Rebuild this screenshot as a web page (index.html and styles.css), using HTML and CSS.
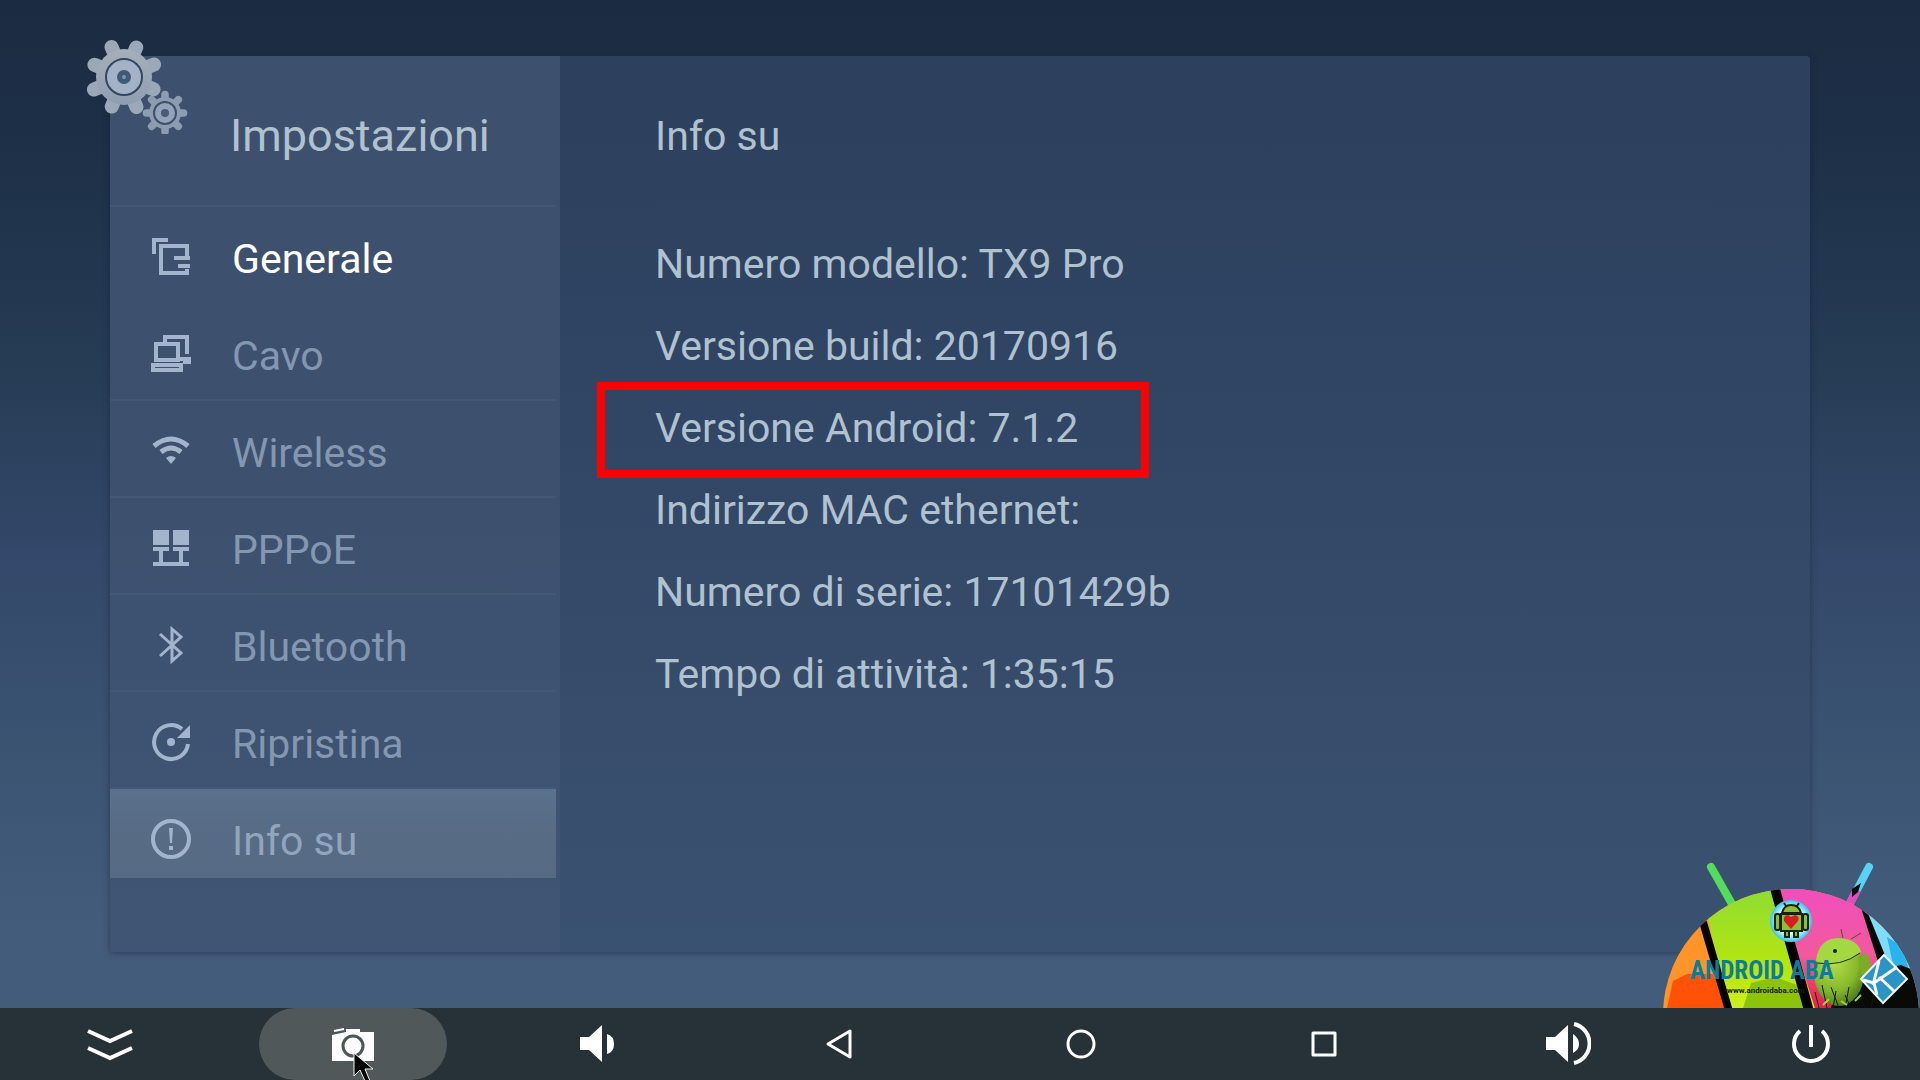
FILE: index.html
```html
<!DOCTYPE html>
<html lang="it">
<head>
<meta charset="utf-8">
<meta name="viewport" content="width=device-width, initial-scale=1">
<title>Impostazioni</title>
<link rel="stylesheet" href="styles.css">
</head>
<body>
<main class="screen">
  <div class="panel">
    <svg class="gears" viewBox="0 0 104 96" aria-hidden="true">
      <defs>
        <linearGradient id="metal" x1="0" y1="0" x2="0" y2="1">
          <stop offset="0" stop-color="#a6afba"/>
          <stop offset="1" stop-color="#8f9eb2"/>
        </linearGradient>
        <g id="teeth">
          <path d="M0-32V32M-32 0H32M-23-23L23 23M-23 23L23-23"/>
        </g>
      </defs>
      <g transform="translate(39 39)">
        <use href="#teeth" transform="rotate(22.5)" stroke="#9ba8b7" stroke-width="14" stroke-linecap="round"/>
        <circle r="28" fill="url(#metal)"/>
        <circle r="18" fill="#a3b2c6" stroke="#33475f" stroke-width="2"/>
        <circle r="7" fill="#425975"/>
        <circle r="2" fill="#8495ad"/>
      </g>
      <g transform="translate(80 75)">
        <use href="#teeth" transform="scale(.58)" stroke="#8c9cb1" stroke-width="13" stroke-linecap="round"/>
        <circle r="16" fill="#8c9cb1"/>
        <circle r="11" fill="#93a4ba" stroke="#3c516d" stroke-width="2"/>
        <circle r="4" fill="#465d79"/>
      </g>
    </svg>

    <nav class="sidebar" aria-label="Impostazioni">
      <h1 class="sidebar-title">Impostazioni</h1>
      <ul class="menu">
        <li class="menu-row"><a class="menu-link is-bright" href="#generale">
          <svg class="menu-icon" viewBox="0 0 40 40"><path d="M3 17V3H17M36 19V9H10V36H36V32M23 21H39M27 29H39" fill="none" stroke="currentColor" stroke-width="4"/></svg>
          <span>Generale</span></a></li>
        <li class="menu-row"><a class="menu-link" href="#cavo">
          <svg class="menu-icon" viewBox="0 0 40 40"><path d="M14 8V3H36V20M5 10H27V26H5ZM2 31H30V36H2ZM29 25H39V28H32" fill="none" stroke="currentColor" stroke-width="4"/></svg>
          <span>Cavo</span></a></li>
        <li class="menu-row"><a class="menu-link" href="#wireless">
          <svg class="menu-icon" viewBox="0 0 40 40"><path d="M3 15Q20 1 37 15M10 21Q20 13 30 21" fill="none" stroke="currentColor" stroke-width="5"/><path d="M15 27Q20 23 25 27L20 33Z" fill="currentColor"/></svg>
          <span>Wireless</span></a></li>
        <li class="menu-row"><a class="menu-link" href="#pppoe">
          <svg class="menu-icon" viewBox="0 0 40 40"><path d="M2 2H18V17H2ZM22 2H38V17H22Z" fill="currentColor"/><path d="M2 21H18M22 21H38M2 36H38M10 21V36M30 21V36" fill="none" stroke="currentColor" stroke-width="4"/></svg>
          <span>PPPoE</span></a></li>
        <li class="menu-row"><a class="menu-link" href="#bluetooth">
          <svg class="menu-icon" viewBox="0 0 40 40"><path d="M9 9L30 28L21 36V4L30 12L9 31" fill="none" stroke="currentColor" stroke-width="3"/></svg>
          <span>Bluetooth</span></a></li>
        <li class="menu-row"><a class="menu-link" href="#ripristina">
          <svg class="menu-icon" viewBox="0 0 40 40"><path d="M37 22A17 17 0 1 1 31 7" fill="none" stroke="currentColor" stroke-width="4"/><path d="M39 3V16H26Z" fill="currentColor"/><circle cx="20" cy="20" r="4" fill="currentColor"/></svg>
          <span>Ripristina</span></a></li>
        <li class="menu-row"><a class="menu-link is-selected" href="#info" aria-current="page">
          <svg class="menu-icon" viewBox="0 0 40 40"><circle cx="20" cy="20" r="18" fill="none" stroke="currentColor" stroke-width="4"/><path d="M18 9H22L21 24H19ZM18 27H22V31H18Z" fill="currentColor"/></svg>
          <span>Info su</span></a></li>
      </ul>
    </nav>

    <section class="details">
      <h2 class="details-title">Info su</h2>
      <ul class="facts">
        <li>Numero modello: TX9 Pro</li>
        <li>Versione build: 20170916</li>
        <li class="marked">Versione Android: 7.1.2</li>
        <li>Indirizzo MAC ethernet:</li>
        <li>Numero di serie: 17101429b</li>
        <li>Tempo di attività: 1:35:15</li>
      </ul>
    </section>
  </div>

  <svg class="brand" viewBox="0 0 265 153" role="img" aria-label="Android ABA">
    <defs>
      <clipPath id="dome"><ellipse cx="136" cy="160" rx="128" ry="126"/></clipPath>
      <linearGradient id="lime" x1="0" y1="0" x2="0" y2="1">
        <stop offset="0" stop-color="#8cdc35"/><stop offset=".7" stop-color="#b8e60c"/><stop offset="1" stop-color="#d0ee20"/>
      </linearGradient>
      <linearGradient id="pink" x1="0" y1="0" x2="0" y2="1">
        <stop offset="0" stop-color="#f04cc4"/><stop offset=".6" stop-color="#f25a9c"/><stop offset="1" stop-color="#e8204a"/>
      </linearGradient>
      <radialGradient id="bot" cx=".4" cy=".3" r=".8">
        <stop offset="0" stop-color="#b8e04c"/><stop offset=".6" stop-color="#86b82a"/><stop offset="1" stop-color="#3c6412"/>
      </radialGradient>
      <radialGradient id="halo">
        <stop offset=".6" stop-color="#e4fbff"/><stop offset="1" stop-color="#36c4ea"/>
      </radialGradient>
    </defs>
    <path d="M56 12L77 49" stroke="#55dc5a" stroke-width="8" stroke-linecap="round"/>
    <path d="M214 12L194 50" stroke="#58d2f6" stroke-width="8" stroke-linecap="round"/>
    <path d="M202 35L194 50" stroke="#e04cbc" stroke-width="8"/>
    <path d="M197 34L206 28L203 37L197 42Z" fill="#0a0a0a"/>
    <g clip-path="url(#dome)">
      <rect width="265" height="153" fill="#ff9428"/>
      <path d="M12 153L18 126L32 119H60L72 153Z" fill="#ff5206"/>
      <path d="M46 30H118L160 153H72Z" fill="url(#lime)"/>
      <path d="M88 153L96 128L120 122L142 130L150 153Z" fill="#8cc40c"/>
      <path d="M118 20H205L245 153H160Z" fill="url(#pink)"/>
      <path d="M204 40H265V153H238Z" fill="#7fdcfa"/>
      <path d="M232 82L248 92L256 124L240 118Z" fill="#28b4f0"/>
      <path d="M45 67L51 67L77 156H71Z" stroke="#060606" stroke-width="2"/>
      <path d="M115 30H123L158 156H150Z" stroke="#060606" stroke-width="2"/>
      <path d="M202 40L212 56L234 110L226 116Z" fill="#060606"/>
      <path d="M176 153L180 138L206 128L220 116L246 110L265 118V153Z" fill="#080a06"/>
    </g>
    <circle cx="136" cy="66" r="21" fill="url(#halo)"/>
    <g stroke="#18220c" stroke-width="2" fill="#8cc030">
      <path d="M130 72V82H134V72M139 72V82H143V72"/>
      <rect x="120" y="59" width="5" height="16" rx="2"/>
      <rect x="148" y="59" width="5" height="16" rx="2"/>
      <path d="M126 59H147V76H126Z"/>
      <path d="M127 58Q129 50 136 50Q144 50 146 58ZM131 51L129 48M142 51L144 48"/>
    </g>
    <path d="M136 74L129 66Q128 60 133 60L136 62L140 60Q145 61 143 66Z" fill="#d81c24"/>
    <path d="M188 83L186 74M196 84L206 78" stroke="#3c5c28" stroke-width="1"/>
    <ellipse cx="184" cy="118" rx="25" ry="33" fill="url(#bot)"/>
    <path d="M161 106Q163 84 183 83Q203 84 206 97Q186 112 161 106Z" fill="#a4d840"/>
    <rect x="205" y="99" width="11" height="26" rx="5" fill="#7aac28" transform="rotate(-12 210 112)"/>
    <path d="M162 108Q186 112 205 98" fill="none" stroke="#20340c" stroke-width="1"/>
    <circle cx="180" cy="96" r="2" fill="#142008"/>
    <path d="M164 153L160 137M172 153L167 130M178 153L181 136M184 153L176 132M190 153L194 132M196 153L190 140M202 153L208 130M210 153L204 138M216 153L220 132" stroke="#0c1806" stroke-width="1" fill="none"/>
    <path d="M168 150L174 144M186 146L192 150M200 146L206 140" stroke="#9cd83c" stroke-width="2"/>
    <text class="brand-name" x="35" y="124">ANDROID ABA</text>
    <text class="brand-url" x="72" y="138">www.androidaba.com</text>
    <path d="M229 100L252 124L228 148L206 124Z" fill="#2a94c4" stroke="#f2f8fa" stroke-width="2"/>
    <path d="M224 106L218 130M219 128L242 112M224 122L240 137M208 125L219 128L222 140" stroke="#f2f8fa" stroke-width="3" fill="none"/>
  </svg>
</main>

<footer class="system-bar">
  <button class="key" type="button" aria-label="Nascondi barra"><svg class="key-icon" viewBox="0 0 48 48"><path d="M2 11L24 21L46 11M2 28L24 38L46 28" fill="none" stroke="currentColor" stroke-width="4"/></svg></button>
  <button class="key is-hovered" type="button" aria-label="Schermata"><svg class="key-icon" viewBox="0 0 48 48"><path d="M3 15L17 12V9H31V12H45V41H3Z" fill="currentColor"/><path d="M5 11L15 9" stroke="currentColor" stroke-width="2"/><circle cx="24" cy="26" r="10" fill="none" stroke="#4f5658" stroke-width="3"/></svg>
    <svg class="pointer" viewBox="0 0 24 28" aria-hidden="true"><path d="M2 1V24L8 18L13 29H18L13 17H21Z" fill="#000" stroke="#f4f4f4" stroke-width="1"/></svg></button>
  <button class="key" type="button" aria-label="Abbassa volume"><svg class="key-icon" viewBox="0 0 48 48"><path d="M8 17H17L30 5V42L17 30H8ZM35 14Q42 16 42 24Q42 32 35 34Z" fill="currentColor"/></svg></button>
  <button class="key" type="button" aria-label="Indietro"><svg class="key-icon" viewBox="0 0 48 48"><path d="M35 11V37L13 24Z" fill="none" stroke="currentColor" stroke-width="3" stroke-linejoin="round"/></svg></button>
  <button class="key" type="button" aria-label="Home"><svg class="key-icon" viewBox="0 0 48 48"><circle cx="24" cy="24" r="13" fill="none" stroke="currentColor" stroke-width="3"/></svg></button>
  <button class="key" type="button" aria-label="Recenti"><svg class="key-icon" viewBox="0 0 48 48"><rect x="13" y="13" width="22" height="22" fill="none" stroke="currentColor" stroke-width="3" stroke-linejoin="round"/></svg></button>
  <button class="key" type="button" aria-label="Alza volume"><svg class="key-icon" viewBox="0 0 48 48"><path d="M3 17H12L25 5V42L12 30H3ZM30 14Q36 18 36 24Q36 30 30 33Z" fill="currentColor"/><path d="M31 4A20 20 0 0 1 31 43" fill="none" stroke="currentColor" stroke-width="4"/></svg></button>
  <button class="key" type="button" aria-label="Spegni"><svg class="key-icon" viewBox="0 0 48 48"><path d="M14 11A17 17 0 1 0 36 11M25 5V27" fill="none" stroke="currentColor" stroke-width="4"/></svg></button>
</footer>
</body>
</html>
```
FILE: styles.css
```css
*,
*::after {
  box-sizing: border-box;
}

body {
  margin: 0;
  min-height: 100vh;
  display: flex;
  flex-direction: column;
  font-family: Roboto, "Liberation Sans", sans-serif;
  font-size: 41px;
  color: #b0c1d0;
  background: #445c7b;
}

h1, h2, ul {
  margin: 0;
  padding: 0;
  font-weight: 400;
  list-style: none;
}

.screen {
  position: relative;
  flex: 1;
  display: flex;
  padding: 56px 110px;
  background: linear-gradient(#1b2b42 0%, #1d3048 15%, #263c54 36%, #33486a 55%, #3b5472 75%, #445c7b 92%);
}

.panel {
  position: relative;
  flex: 1;
  display: flex;
  border-radius: 4px;
  background: linear-gradient(#2d405d, #2f4462 30%, #364c6a 70%, #3a5271);
  box-shadow: 0 1px 6px rgba(15, 30, 52, 0.5);
}

.gears {
  position: absolute;
  top: -18px;
  left: -25px;
  width: 104px;
  height: 96px;
}

.sidebar {
  flex: 0 0 450px;
  border-radius: 4px 0 0 4px;
  background: linear-gradient(#3d506d, #3d516f 50%, #3f5573);
}

.sidebar-title {
  padding: 49px 0 38px 120px;
  font-size: 45px;
  line-height: 62px;
}

.menu {
  margin-right: 4px;
}

.menu-row {
  height: 97px;
  border-top: 2px solid #435875;
}

.menu-row:nth-child(2) {
  border-color: transparent;
}

.menu-link {
  display: flex;
  align-items: center;
  gap: 41px;
  height: 89px;
  padding: 14px 0 0 41px;
  color: #8397b1;
  text-decoration: none;
}

.menu-link.is-bright {
  color: #fff;
}

.menu-link.is-selected {
  color: #91a5bd;
  background: linear-gradient(#59728e, #586c86 40%, #566a84);
}

.menu-icon {
  width: 40px;
  height: 40px;
  margin-bottom: 4px;
  color: #a3b5cc;
}

.details {
  flex: 1;
  padding: 0 95px;
}

.details-title {
  padding: 49px 0 39px;
  font-size: 41px;
  line-height: 62px;
  border-bottom: 1px solid #30435f;
}

.facts {
  padding-top: 16px;
  line-height: 82px;
}

.marked {
  position: relative;
}

.marked::after {
  content: "";
  position: absolute;
  top: -5px;
  bottom: -9px;
  left: -58px;
  width: 552px;
  border: 8px solid #fe0000;
}

.brand {
  position: absolute;
  right: 0;
  bottom: 0;
  width: 265px;
  height: 153px;
}

.brand-name {
  font: 700 25px "Liberation Sans Narrow", "Roboto Condensed", Roboto, sans-serif;
  fill: #0e7c98;
}

.brand-url {
  font: 700 8px Roboto, sans-serif;
  fill: #14200a;
}

.system-bar {
  display: flex;
  justify-content: space-between;
  height: 72px;
  padding: 0 16px;
  background: #263238;
}

.key {
  position: relative;
  display: grid;
  place-items: center;
  width: 188px;
  padding: 0;
  border: 0;
  border-radius: 36px;
  color: #fff;
  background: none;
}

.key.is-hovered {
  background: #505859;
}

.key-icon {
  width: 48px;
  height: 48px;
}

.pointer {
  position: absolute;
  left: 93px;
  bottom: 0;
  width: 24px;
  height: 28px;
}
```
